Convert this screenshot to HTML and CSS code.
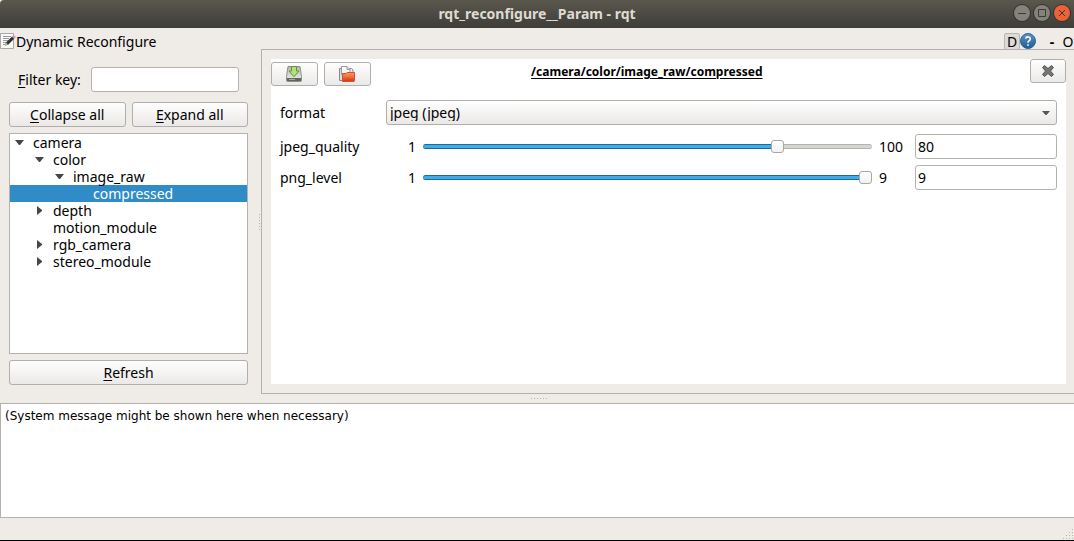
FILE: index.html
```html
<!DOCTYPE html>
<html lang="en">
<head>
<meta charset="utf-8">
<title>rqt_reconfigure__Param - rqt</title>
<link rel="stylesheet" href="styles.css">
</head>
<body>
<div class="window">
  <header class="titlebar">
    <h1 class="window-title">rqt_reconfigure__Param - rqt</h1>
    <div class="window-controls">
      <button class="wm-button" aria-label="Minimize"><svg viewBox="0 0 16 16"><path d="M4 8.500h8"/></svg></button>
      <button class="wm-button" aria-label="Maximize"><svg viewBox="0 0 16 16"><path d="M4.500 4.500h7v7h-7z"/></svg></button>
      <button class="wm-button wm-close" aria-label="Close window"><svg viewBox="0 0 16 16"><path d="M5 5l6 6M11 5l-6 6"/></svg></button>
    </div>
  </header>

  <div class="dock-header">
    <svg class="dock-icon" viewBox="0 0 16 16">
      <path d="M.5 .5h13v15H.5z" fill="#fafafa" stroke="#a9a9a6"/>
      <path d="M3 3.500h8M3 5.500h6M3 7.500h5M3 9.500h3M3 11.500h2" stroke="#999" fill="none"/>
      <path d="M5 12.500l1-3 6-6 2.200 2.200-6 6z" fill="#2e3436"/>
      <path d="M5 12.500l1-3 2 2z" fill="#d8c86a"/>
      <path d="M12 3.500l1.800-1.600 2 2-1.600 1.800z" fill="#cf93b8"/>
    </svg>
    <h2 class="dock-title">Dynamic Reconfigure</h2>
    <div class="dock-actions">
      <button class="dock-d">D</button>
      <button class="dock-help" aria-label="Help">
        <svg viewBox="0 0 16 16"><defs><linearGradient id="help" x2="0" y2="1"><stop stop-color="#5b94c4"/><stop offset="1" stop-color="#205b91"/></linearGradient></defs><circle cx="8" cy="8" r="7.500" fill="url(#help)" stroke="#2c659a"/><path d="M5.700 5.700C6 3.300 10.300 3.300 10.300 5.900 10.300 7.600 8 7.600 8 9.700M8 11.200v1.600" fill="none" stroke="#fff" stroke-width="1.600"/></svg>
      </button>
      <button class="dock-dash">-</button>
      <button class="dock-o">O</button>
    </div>
  </div>

  <main class="workspace">
    <section class="sidebar">
      <div class="filter">
        <label for="filter"><u>F</u>ilter key:</label>
        <input class="field" id="filter" type="text">
      </div>
      <div class="tree-actions">
        <button class="button"><span><u>C</u>ollapse all</span></button>
        <button class="button"><span><u>E</u>xpand all</span></button>
      </div>
      <ul class="tree">
        <li class="node"><svg class="arrow" viewBox="0 0 10 10"><path d="M0 2h9L5 7H4z"/></svg>camera</li>
        <li class="node level-1"><svg class="arrow" viewBox="0 0 10 10"><path d="M0 2h9L5 7H4z"/></svg>color</li>
        <li class="node level-2"><svg class="arrow" viewBox="0 0 10 10"><path d="M0 2h9L5 7H4z"/></svg>image_raw</li>
        <li class="node level-3 selected"><span class="arrow"></span>compressed</li>
        <li class="node level-1"><svg class="arrow" viewBox="0 0 10 10"><path d="M2 0v9L7 5V4z"/></svg>depth</li>
        <li class="node level-1"><span class="arrow"></span>motion_module</li>
        <li class="node level-1"><svg class="arrow" viewBox="0 0 10 10"><path d="M2 0v9L7 5V4z"/></svg>rgb_camera</li>
        <li class="node level-1"><svg class="arrow" viewBox="0 0 10 10"><path d="M2 0v9L7 5V4z"/></svg>stereo_module</li>
      </ul>
      <button class="button"><span><u>R</u>efresh</span></button>
    </section>

    <div class="splitter-v"><i class="grip-v"></i></div>

    <section class="scroll-frame">
      <div class="panel">
        <div class="panel-header">
          <div class="panel-tools">
            <button class="button tool" aria-label="Save">
              <svg viewBox="0 0 16 16"><defs><linearGradient id="disk" x2="0" y2="1"><stop stop-color="#b5b7b4"/><stop offset="1" stop-color="#eee"/></linearGradient></defs><path d="M2 .5h12l1.500 10v4.200q0 .8-.8.800H1.300q-.8 0-.8-.8v-4.200z" fill="url(#disk)" stroke="#8d8f8c"/><path d="M1 12h14v3H1z" fill="#62645f"/><path d="M3 13.500h6" stroke="#aaa"/><path d="M5.500.500h5v4.500h2.500L8 10.800 3 5h2.500z" fill="#b4e07c" stroke="#62982d"/></svg>
            </button>
            <button class="button tool" aria-label="Open">
              <svg viewBox="0 0 16 16"><defs><linearGradient id="folder" x2="0" y2="1"><stop stop-color="#f79b67"/><stop offset=".5" stop-color="#ef6c36"/><stop offset="1" stop-color="#cf3414"/></linearGradient></defs><path d="M.5 2.500h5v12h-5z" fill="#ddd" stroke="#888"/><path d="M10 2.500h2.500l1.500 1.500v4h-4z" fill="#eee" stroke="#888"/><path d="M2.500.5h5.500l3 3v5H2.500z" fill="#f8f8f8" stroke="#999"/><path d="M8 .5v3h3" fill="#ddd" stroke="#999"/><path d="M3.500 7.500h3.500l1-1h7.500v8q0 1-1 1h-11z" fill="url(#folder)" stroke="#d2502a"/></svg>
            </button>
          </div>
          <h3 class="node-name">/camera/color/image_raw/compressed</h3>
          <button class="button close" aria-label="Close">
            <svg viewBox="0 0 16 16"><path d="M4.500 2.500L8 5.500l3.500-3 2 2L10.500 8l3 3.500-2 2L8 10.500l-3.500 3-2-2L5.500 8l-3-3.500z" fill="#747671" stroke="#555753" stroke-linejoin="round"/></svg>
          </button>
        </div>

        <div class="params">
          <label class="format-label" for="format">format</label>
          <div class="combo">
            <select class="button" id="format"><option>jpeg (jpeg)</option></select>
            <svg class="combo-arrow" viewBox="0 0 10 10"><path d="M1 3h8L5.500 7h-1z"/></svg>
          </div>

          <label for="quality">jpeg_quality</label>
          <span class="min">1</span>
          <input class="slider" id="quality" type="range" min="1" max="100" value="80" style="--fill: 79%">
          <span>100</span>
          <input class="field" type="text" value="80" aria-label="jpeg_quality value">

          <label for="level">png_level</label>
          <span class="min">1</span>
          <input class="slider" id="level" type="range" min="1" max="9" value="9" style="--fill: 99%">
          <span>9</span>
          <input class="field" type="text" value="9" aria-label="png_level value">
        </div>
      </div>
    </section>
  </main>

  <div class="splitter-h"><i class="grip-h"></i></div>
  <output class="messages">(System message might be shown here when necessary)</output>
  <footer class="statusbar">
    <svg class="size-grip" viewBox="0 0 11 11"><path d="M9 0h1v1H9zM6 3h1v1H6zM9 3h1v1H9zM3 6h1v1H3zM6 6h1v1H6zM9 6h1v1H9zM0 9h1v1H0zM3 9h1v1H3zM6 9h1v1H6zM9 9h1v1H9z"/></svg>
  </footer>
</div>
</body>
</html>
```
FILE: styles.css
```css
* { box-sizing: border-box; }

body {
  margin: 0;
  background: #000;
  color: #000;
  font: 14px/17px "Noto Sans", "Open Sans", sans-serif;
}

h1, h2, h3, ul { margin: 0; padding: 0; font-size: inherit; font-weight: normal; }
button, input, select { margin: 0; font: inherit; color: inherit; }
u { text-underline-offset: 2px; }

.window {
  display: flex;
  flex-direction: column;
  min-height: 100vh;
  background: #efebe7;
  border-bottom: 1px solid #000;
  overflow: hidden;
}

.titlebar {
  display: grid;
  grid-template-columns: 1fr auto 1fr;
  align-items: center;
  height: 28px;
  padding: 0 4px 2px;
  background: linear-gradient(#5a574d, #3e3d39);
  border-radius: 4px 0 0 0;
}
.window-title { grid-column: 2; color: #dfdbd2; font-weight: bold; font-size: 14px; }
.window-controls { display: flex; justify-content: flex-end; gap: 4px; }
.wm-button {
  width: 16px;
  height: 16px;
  padding: 0;
  border: 0;
  border-radius: 50%;
  background: #85827a;
  box-shadow: 0 0 0 1px #34332f;
}
.wm-button svg { display: block; fill: none; stroke: #3b3a36; }
.wm-close { background: #ee6036; }

.dock-header { display: flex; align-items: center; height: 21px; padding-top: 5px; }
.dock-icon { width: 16px; height: 16px; }
.dock-title { flex: 1; font-size: 14px; }
.dock-actions { display: flex; align-items: center; }
.dock-actions button { padding: 0; border: 0; background: none; }
.dock-actions .dock-d {
  width: 16px;
  height: 17px;
  border: 1px solid #bbb6b2;
  border-radius: 2px;
  background: #dedad7;
  line-height: 15px;
}
.dock-help svg { display: block; width: 16px; height: 16px; }
.dock-actions .dock-dash { width: 26px; padding-left: 6px; font-weight: bold; }
.dock-actions .dock-o { width: 12px; }

.workspace { display: flex; flex: 1; }
.sidebar {
  display: flex;
  flex-direction: column;
  gap: 6px;
  width: 257px;
  padding: 18px 9px 9px;
}
.filter { display: flex; align-items: center; gap: 10px; margin-bottom: 4px; padding: 0 9px; }
.filter label { flex: none; }
.filter .field { flex: 1; }
.tree-actions { display: grid; grid-template-columns: 1fr 1fr; gap: 6px; }

.field {
  min-width: 0;
  height: 25px;
  padding: 0 2px;
  border: 1px solid #b6b2ae;
  border-radius: 3px;
  background: #fff;
}
.button {
  height: 25px;
  padding: 0 3px;
  border: 1px solid #b1aeab;
  border-radius: 3px;
  background: linear-gradient(#fefefe, #ebe9e7);
}

.tree { flex: 1; border: 1px solid #b4b1ae; background: #fff; list-style: none; }
.node { display: flex; align-items: center; gap: 8px; height: 17px; padding-left: 5px; }
.level-1 { padding-left: 25px; }
.level-2 { padding-left: 45px; }
.level-3 { padding-left: 65px; }
.selected { background: #308cc6; color: #fff; }
.arrow { width: 10px; height: 10px; fill: #464646; }

.splitter-v { display: flex; align-items: center; width: 4px; }
.grip-v { width: 4px; height: 16px; background: repeating-linear-gradient(transparent 0 1px, #efebe7 1px 3px), linear-gradient(90deg, transparent 2px, #b5b2af 2px 3px, transparent 3px); }
.splitter-h { display: flex; justify-content: center; align-items: center; height: 9px; padding-left: 4px; }
.grip-h { width: 16px; height: 1px; background: repeating-linear-gradient(90deg, #b5b2af 0 1px, transparent 1px 3px); }

.scroll-frame {
  display: flex;
  flex: 1;
  padding: 9px 8px 9px 9px;
  border: solid #b4b1ae;
  border-width: 1px 0 1px 1px;
}
.panel { flex: 1; background: #fff; }
.panel-header { display: grid; grid-template-columns: 6fr auto 7fr; }
.panel-tools { display: flex; gap: 6px; padding-top: 3px; }
.button svg { display: block; width: 16px; height: 16px; margin: auto; fill: none; }
.tool { width: 47px; height: 24px; padding: 0 4px 0 3px; }
.close { justify-self: end; width: 36px; height: 24px; }
.node-name {
  margin-top: 4px;
  font-size: 12px;
  font-weight: bold;
  text-decoration: underline;
  text-underline-offset: 2px;
}

.params {
  display: grid;
  grid-template-columns: 106px 31px 1fr 36px 142px;
  align-items: center;
  row-gap: 6px;
  padding: 14px 9px;
}
.combo { display: grid; grid-column: 2 / -1; align-items: center; }
.combo, .format-label { padding-bottom: 3px; }
.combo select { grid-area: 1 / 1; width: 100%; appearance: none; }
.combo-arrow { grid-area: 1 / 1; justify-self: end; width: 10px; height: 10px; margin-right: 6px; fill: #555753; pointer-events: none; }
.min { padding-right: 1px; text-align: right; }

.slider { appearance: none; min-width: 0; height: 13px; margin: 0 7px 0 6px; background: none; }
.slider::-webkit-slider-runnable-track {
  height: 5px;
  border: solid transparent;
  border-width: 1px 0;
  border-radius: 3px;
  background:
    linear-gradient(90deg, #3daee9 var(--fill), #d6d5d2 var(--fill)) padding-box,
    linear-gradient(90deg, #20689a var(--fill), #b5b3b0 var(--fill)) border-box;
}
.slider::-webkit-slider-thumb {
  appearance: none;
  width: 13px;
  height: 13px;
  margin-top: -5px;
  border: 1px solid #aaa7a4;
  border-radius: 3px;
  background: linear-gradient(#fff, #f3f2f1);
}

.messages {
  display: block;
  height: 115px;
  padding: 5px 4px;
  border: 1px solid #b4b1ae;
  border-right: 0;
  background: #fff;
  font: 12px/15px "DejaVu Sans", sans-serif;
}
.statusbar { display: flex; align-items: flex-end; justify-content: flex-end; height: 22px; }
.size-grip { width: 11px; height: 11px; fill: #b5b2af; }
```
